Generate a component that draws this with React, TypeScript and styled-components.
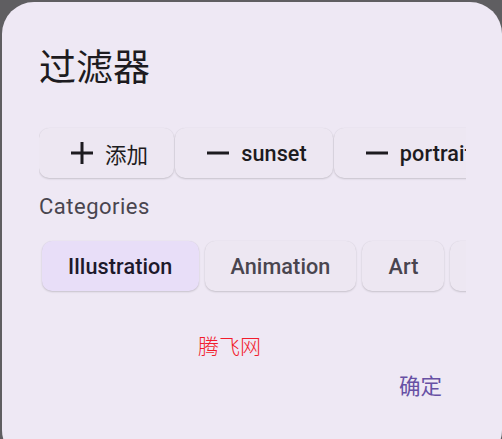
import React from 'react';
import styled, { createGlobalStyle } from 'styled-components';

const GlobalStyle = createGlobalStyle`
	html, body {
		margin: 0;
		padding: 0;
		background: #5f5e61;
		overflow: hidden;
	}
	body {
		font-family: Roboto, "Noto Sans CJK SC", sans-serif;
	}
`;

const Screen = styled.div`
	width: 502px;
	height: 439px;
	padding: 2px 0 0 2px;
	box-sizing: border-box;
	overflow: hidden;
`;

const Dialog = styled.div`
	width: 500px;
	height: 460px;
	box-sizing: border-box;
	padding: 41px 36px 0 37px;
	background: #eee8f4;
	border-radius: 32px;
	display: flex;
	flex-direction: column;
`;

const Title = styled.h2`
	margin: 0 0 41px;
	font-family: "Noto Sans CJK SC", Roboto, sans-serif;
	font-size: 37px;
	line-height: 44px;
	font-weight: 400;
	color: #1d1b20;
`;

const ChipRow = styled.div<{ $gap: number; $inset: number }>`
	display: flex;
	gap: ${p => p.$gap}px;
	padding: 4px 0 4px ${p => p.$inset}px;
	margin: -4px 0;
	overflow: hidden;
	flex-shrink: 0;
`;

const TagChip = styled.button`
	flex-shrink: 0;
	height: 50px;
	display: flex;
	align-items: center;
	gap: 12px;
	padding: 0 26px 0 32px;
	border: none;
	border-radius: 10px;
	background: #ede7f2;
	box-shadow: 0 1px 2px rgba(0, 0, 0, 0.16), 0 0 1px rgba(0, 0, 0, 0.08);
	color: #1d1b20;
`;

const ChipLabel = styled.span<{ $cjk?: boolean }>`
	font-family: ${p => (p.$cjk ? '"Noto Sans CJK SC", sans-serif' : 'Roboto, sans-serif')};
	font-size: ${p => (p.$cjk ? '21.5px' : '21.6px')};
	font-weight: ${p => (p.$cjk ? 400 : 500)};
	letter-spacing: 0.1px;
`;

const CategoryChip = styled.button<{ $selected?: boolean }>`
	flex-shrink: 0;
	height: 50px;
	padding: 0 26px;
	border: none;
	border-radius: 10px;
	background: ${p => (p.$selected ? '#e8def8' : '#ede7f2')};
	box-shadow: 0 1px 2px rgba(0, 0, 0, 0.16), 0 0 1px rgba(0, 0, 0, 0.08);
	font-family: Roboto, sans-serif;
	font-size: 21.6px;
	font-weight: 500;
	letter-spacing: 0.1px;
	color: ${p => (p.$selected ? '#1d192b' : '#49454f')};
`;

const SectionLabel = styled.div`
	margin: 15px 0 20px;
	font-size: 22px;
	line-height: 28px;
	letter-spacing: 0.5px;
	color: #49454f;
`;

const Watermark = styled.div`
	margin: 40px 0 0 159px;
	font-family: "Noto Sans CJK SC", sans-serif;
	font-size: 21px;
	font-weight: 300;
	line-height: 28px;
	color: #f21c2c;
`;

const Actions = styled.div`
	display: flex;
	justify-content: flex-end;
	margin-top: 12px;
`;

const TextButton = styled.button`
	padding: 0 24px 0 12px;
	border: none;
	background: none;
	font-family: "Noto Sans CJK SC", sans-serif;
	font-size: 21.5px;
	line-height: 28px;
	color: #6750a4;
`;

const Icon = ({ plus }: { plus?: boolean }) => (
	<svg width="22" height="22" viewBox="0 0 22 22">
		<path d={plus ? 'M0 11H22M11 0V22' : 'M0 11H22'} stroke="#1d1b20" strokeWidth="3" fill="none" />
	</svg>
);

const tags = ['sunset', 'portrait', 'landscape'];
const categories = ['Illustration', 'Animation', 'Art', 'Photography'];

const App = () => {
	return (
		<Screen>
			<GlobalStyle />
			<Dialog>
				<Title>过滤器</Title>
				<ChipRow $gap={1} $inset={0}>
					<TagChip>
						<Icon plus />
						<ChipLabel $cjk>添加</ChipLabel>
					</TagChip>
					{tags.map(tag => (
						<TagChip key={tag}>
							<Icon />
							<ChipLabel>{tag}</ChipLabel>
						</TagChip>
					))}
				</ChipRow>
				<SectionLabel>Categories</SectionLabel>
				<ChipRow $gap={6} $inset={3}>
					{categories.map((name, i) => (
						<CategoryChip key={name} $selected={i === 0}>
							{name}
						</CategoryChip>
					))}
				</ChipRow>
				<Watermark>腾飞网</Watermark>
				<Actions>
					<TextButton>确定</TextButton>
				</Actions>
			</Dialog>
		</Screen>
	);
};

export default App;
